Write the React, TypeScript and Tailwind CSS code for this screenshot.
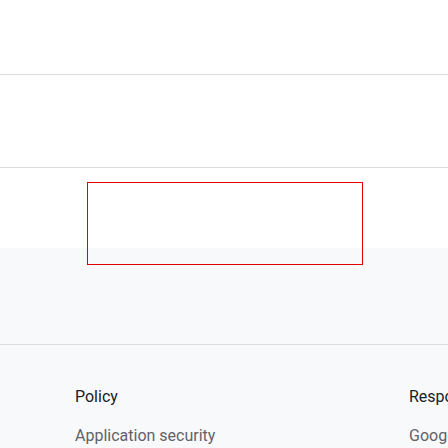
import React from "react";

export default function App() {
  return (
    <div className="relative w-[448px] h-[448px] overflow-hidden bg-white" style={{ fontFamily: "Roboto, 'Liberation Sans', sans-serif" }}>
      <div className="h-[75px] border-b border-[#dadce0]" />
      <div className="h-[93px] border-b border-[#dadce0]" />
      <div className="h-[80px]" />
      <div className="bg-[#f8f9fa] h-[200px]">
        <div className="h-[97px] border-b border-[#dadce0]" />
        <div className="flex pl-[75px] pt-[40px]">
          <div className="w-[334px] shrink-0">
            <div className="text-[16px] leading-[24px] text-[#202124]">Policy</div>
            <div className="mt-[15px] text-[16px] leading-[24px] text-[#5f6368] whitespace-nowrap">Application security</div>
          </div>
          <div className="shrink-0">
            <div className="text-[16px] leading-[24px] text-[#202124] whitespace-nowrap">Responsibility</div>
            <div className="mt-[15px] text-[16px] leading-[24px] text-[#5f6368] whitespace-nowrap">Google Safety Center</div>
          </div>
        </div>
      </div>
      <div className="absolute left-[87px] top-[182px] w-[276px] h-[83px] border border-[#e00000]" />
    </div>
  );
}
